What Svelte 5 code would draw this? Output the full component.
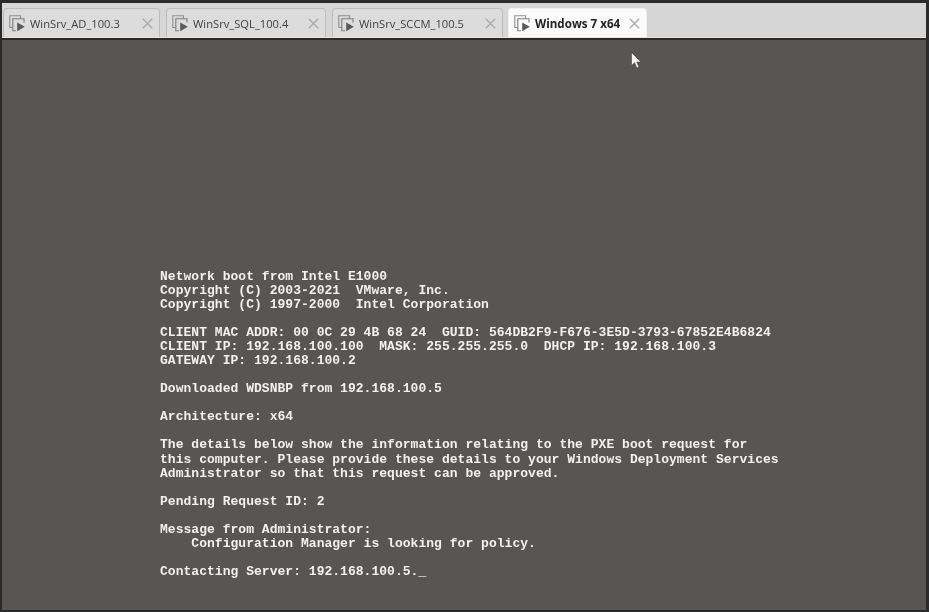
<script>
  const tabs = [
    { name: 'WinSrv_AD_100.3', width: 157, active: false },
    { name: 'WinSrv_SQL_100.4', width: 160, active: false },
    { name: 'WinSrv_SCCM_100.5', width: 171, active: false },
    { name: 'Windows 7 x64', width: 139, active: true }
  ];
  const boot = `Network boot from Intel E1000
Copyright (C) 2003-2021  VMware, Inc.
Copyright (C) 1997-2000  Intel Corporation

CLIENT MAC ADDR: 00 0C 29 4B 68 24  GUID: 564DB2F9-F676-3E5D-3793-67852E4B6824
CLIENT IP: 192.168.100.100  MASK: 255.255.255.0  DHCP IP: 192.168.100.3
GATEWAY IP: 192.168.100.2

Downloaded WDSNBP from 192.168.100.5

Architecture: x64

The details below show the information relating to the PXE boot request for
this computer. Please provide these details to your Windows Deployment Services
Administrator so that this request can be approved.

Pending Request ID: 2

Message from Administrator:
    Configuration Manager is looking for policy.

Contacting Server: 192.168.100.5._`;
</script>

<div class="window">
  <div class="strip">
    {#each tabs as tab}
      <div class="tab" class:active={tab.active} style="width:{tab.width}px">
        <svg class="icon" viewBox="0 0 17 17" width="17" height="17" fill="none" aria-hidden="true">
          <path d="M3.5 12.5H0.8V0.8H11.5V3.5" stroke="#8e8e8e" stroke-width="1.1" />
          <path d="M7 15.8H3.8V3.8H15V7.5" stroke="#7c7c7c" stroke-width="1.1" />
          <path d="M8.2 7.5L15.8 11.8L8.2 16.2Z" fill="#5a5a5a" />
        </svg>
        <span class="label">{tab.name}</span>
        <svg class="close" viewBox="0 0 11 11" width="11" height="11" aria-hidden="true">
          <path d="M0.8 0.8L10.2 10.2M10.2 0.8L0.8 10.2" stroke="#aeaeae" stroke-width="1.5" />
        </svg>
      </div>
    {/each}
  </div>
  <div class="screen">
    <pre class="console">{boot}</pre>
    <svg class="pointer" viewBox="0 0 11 17" width="11" height="17" aria-hidden="true">
      <path d="M0.5 0.5V13.5L3.6 10.8L5.8 16L8 15L5.8 10H10Z" fill="#f4f4f4" stroke="#333" stroke-width="0.5" />
    </svg>
  </div>
</div>

<style>
  :global(body) {
    margin: 0;
    background: #2a2a2a;
  }
  .window {
    width: 929px;
    height: 612px;
    box-sizing: border-box;
    padding: 3px 2px 2px 2px;
    display: flex;
    flex-direction: column;
    overflow: hidden;
  }
  .strip {
    height: 35px;
    flex: none;
    box-sizing: border-box;
    background: #d6d6d6;
    border-bottom: 1px solid #e6e6e6;
    padding: 5px 0 0 1px;
    display: flex;
    align-items: stretch;
    gap: 6px;
    margin-right: 1px;
  }
  .tab {
    box-sizing: border-box;
    display: flex;
    align-items: center;
    padding: 0 6px 0 5px;
    background: #dcdcdc;
    border: 1px solid #bdbdbd;
    border-bottom: none;
    border-radius: 4px 4px 0 0;
    font-family: "Open Sans", "Liberation Sans", sans-serif;
    font-size: 11.2px;
    color: #404040;
    filter: blur(0.4px);
  }
  .tab.active {
    background: #fbfbfb;
    border-color: #f0f0f0;
    color: #222;
    font-weight: 700;
    font-size: 11.6px;
    margin-left: -1px;
  }
  .icon {
    flex: none;
    margin-right: 4px;
  }
  .label {
    flex: 1;
    white-space: nowrap;
  }
  .close {
    flex: none;
  }
  .screen {
    flex: 1;
    position: relative;
    margin-top: 2px;
    margin-right: 1px;
    background: #575655;
    padding-top: 229.5px;
    padding-left: 158px;
  }
  .console {
    margin: 0;
    font-family: "Liberation Mono", "DejaVu Sans Mono", monospace;
    font-weight: 700;
    font-size: 13px;
    letter-spacing: 0.03px;
    line-height: 14.08px;
    color: #f2f2f2;
    filter: blur(0.35px);
  }
  .pointer {
    position: absolute;
    left: 629px;
    top: 12px;
  }
</style>
